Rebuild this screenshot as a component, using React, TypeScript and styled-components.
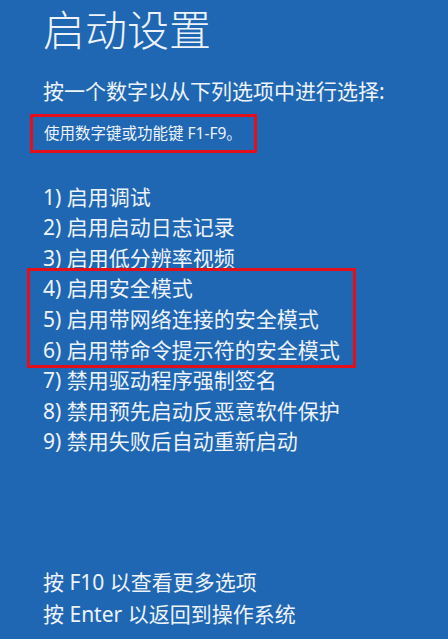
import React from "react";
import styled, { createGlobalStyle } from "styled-components";

const Global = createGlobalStyle`
  html, body {
    margin: 0;
    padding: 0;
    background: #1f67b3;
  }
  * { box-sizing: border-box; }
`;

const Page = styled.main`
  display: flex;
  flex-direction: column;
  width: 448px;
  height: 639px;
  padding: 6px 0 9px 43px;
  background: #1f67b3;
  color: #eef3fa;
  font-family: "Noto Sans", "Noto Sans CJK SC", sans-serif;
  overflow: hidden;
`;

const Title = styled.h1`
  margin: 0;
  font-size: 42px;
  line-height: 48px;
  font-weight: 300;
  letter-spacing: 0;
`;

const Prompt = styled.p`
  margin: 22px 0 0;
  font-size: 21px;
  line-height: 30px;
  font-weight: 400;
`;

const Hint = styled.div`
  width: 227px;
  height: 39px;
  margin: 8px 0 0 -13px;
  padding: 4px 0 4px 11px;
  border: 3px solid #e3101c;
  font-size: 15.5px;
  line-height: 25px;
  white-space: nowrap;
`;

const OptionList = styled.ol`
  list-style: none;
  margin: 28.7px 0 0;
  padding: 0;
  display: flex;
  flex-direction: column;
`;

const Option = styled.li`
  font-size: 21px;
  line-height: 30.6px;
  white-space: nowrap;
`;

const Highlight = styled.div`
  width: 329px;
  margin: -5.5px 0 -3px -16px;
  padding: 2.5px 0 0 13px;
  border: 3px solid #e3101c;
`;

const Footer = styled.div`
  margin-top: auto;
  display: flex;
  flex-direction: column;
`;

const FooterLine = styled.p`
  margin: 0;
  font-size: 21px;
  line-height: 32px;
  white-space: nowrap;
`;

const before = ["1) 启用调试", "2) 启用启动日志记录", "3) 启用低分辨率视频"];
const highlighted = ["4) 启用安全模式", "5) 启用带网络连接的安全模式", "6) 启用带命令提示符的安全模式"];
const after = ["7) 禁用驱动程序强制签名", "8) 禁用预先启动反恶意软件保护", "9) 禁用失败后自动重新启动"];

export default function App() {
  return (
    <>
      <Global />
      <Page>
        <Title>启动设置</Title>
        <Prompt>按一个数字以从下列选项中进行选择:</Prompt>
        <Hint>使用数字键或功能键 F1-F9。</Hint>
        <OptionList>
          {before.map((t) => (
            <Option key={t}>{t}</Option>
          ))}
          <Highlight>
            {highlighted.map((t) => (
              <Option key={t}>{t}</Option>
            ))}
          </Highlight>
          {after.map((t) => (
            <Option key={t}>{t}</Option>
          ))}
        </OptionList>
        <Footer>
          <FooterLine>按 F10 以查看更多选项</FooterLine>
          <FooterLine>按 Enter 以返回到操作系统</FooterLine>
        </Footer>
      </Page>
    </>
  );
}
